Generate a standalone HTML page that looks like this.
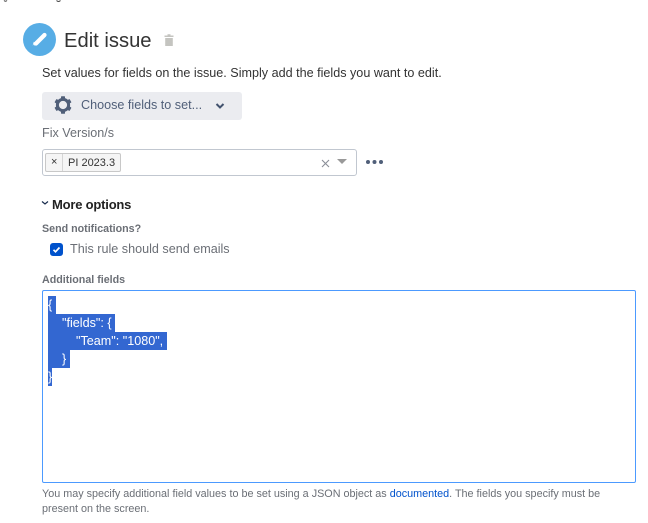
<!DOCTYPE html>
<html><head><meta charset="utf-8"><style>
html,body{margin:0;padding:0;background:#fff}
body{width:648px;height:523px;position:relative;overflow:hidden;font-family:"Liberation Sans",sans-serif}
.a{position:absolute;white-space:nowrap}
</style></head><body>
<svg class="a" style="left:0;top:0" width="70" height="4" viewBox="0 0 70 4"><path d="M4 0.5Q5.5 2 7 0.5M56.5 0.5Q58.5 2.5 60.5 0.5" fill="none" stroke="#444" stroke-width="1"/></svg>
<svg class="a" style="left:23px;top:23px" width="33" height="33" viewBox="0 0 33 33"><circle cx="16.5" cy="16.5" r="16.5" fill="#57ade5"/><path d="M13 20.5 L21.5 12" stroke="#fff" stroke-width="4.2" stroke-linecap="round"/><path d="M9.5 23 L10.8 18.8 L13.8 21.8 Z" fill="#fff"/><path d="M9.5 23.2 L11 21.7" stroke="#57ade5" stroke-width="1"/></svg>
<div class="a" style="left:64px;top:29px;font-size:20.2px;line-height:24px;color:#333">Edit issue</div>
<svg class="a" style="left:163px;top:33px" width="12" height="14" viewBox="0 0 12 14"><path d="M1.5 2.5H4.5V1.2H7.5V2.5H10.5V4H1.5Z M2.2 5H9.8V13H2.2Z" fill="#c4c4c0"/></svg>
<div class="a" style="left:42px;top:65px;font-size:12.6px;line-height:16px;color:#333">Set values for fields on the issue. Simply add the fields you want to edit.</div>
<div class="a" style="left:42px;top:92px;width:200px;height:28px;background:#ebecf0;border-radius:3px"></div>
<svg class="a" style="left:54px;top:96px" width="18" height="18" viewBox="0 0 18 18"><circle cx="9" cy="9" r="5.6" fill="none" stroke="#505f79" stroke-width="3"/><g fill="#505f79"><rect x="7" y="0.3" width="4" height="3" rx=".6"/><rect x="7" y="14.7" width="4" height="3" rx=".6"/><rect x="7" y="0.3" width="4" height="3" rx=".6" transform="rotate(60 9 9)"/><rect x="7" y="0.3" width="4" height="3" rx=".6" transform="rotate(120 9 9)"/><rect x="7" y="0.3" width="4" height="3" rx=".6" transform="rotate(240 9 9)"/><rect x="7" y="0.3" width="4" height="3" rx=".6" transform="rotate(300 9 9)"/></g></svg>
<div class="a" style="left:81px;top:97px;font-size:12.6px;line-height:16px;color:#505f79">Choose fields to set...</div>
<svg class="a" style="left:215px;top:102px" width="10" height="8" viewBox="0 0 10 8"><path d="M1.5 2 L5 5.5 L8.5 2" fill="none" stroke="#42526e" stroke-width="2"/></svg>
<div class="a" style="left:42px;top:125px;font-size:12.6px;line-height:16px;color:#6b6f76">Fix Version/s</div>
<div class="a" style="left:42px;top:149px;width:313px;height:25px;border:1px solid #c1c7d0;border-radius:3px;background:#fff"></div>
<div class="a" style="left:45px;top:153px;width:74px;height:17px;border:1px solid #c8c8c8;border-radius:2px;background:#f5f5f5"></div>
<div class="a" style="left:62px;top:154px;width:1px;height:17px;background:#d5d5d5"></div>
<div class="a" style="left:51px;top:155px;font-size:11px;line-height:14px;color:#333">×</div>
<div class="a" style="left:68px;top:156px;font-size:11px;line-height:14px;color:#333">PI 2023.3</div>
<svg class="a" style="left:321px;top:159px" width="9" height="9" viewBox="0 0 9 9"><path d="M1 1L8 8M8 1L1 8" stroke="#8a8f98" stroke-width="1.1"/></svg>
<svg class="a" style="left:337px;top:159px" width="10" height="6" viewBox="0 0 10 6"><path d="M0 0H10L5 5Z" fill="#999"/></svg>
<svg class="a" style="left:365px;top:159px" width="19" height="6" viewBox="0 0 19 6"><g fill="#505f79"><circle cx="3" cy="3" r="2"/><circle cx="9.5" cy="3" r="2"/><circle cx="16" cy="3" r="2"/></g></svg>
<svg class="a" style="left:41px;top:200px" width="8" height="6" viewBox="0 0 8 6"><path d="M1 1.5L4 4L7 1.5" fill="none" stroke="#172b4d" stroke-width="1.2"/></svg>
<div class="a" style="left:52px;top:197px;font-size:13px;line-height:16px;font-weight:bold;color:#222;letter-spacing:-.2px">More options</div>
<div class="a" style="left:42px;top:223px;font-size:10.7px;line-height:13px;font-weight:bold;color:#6b6f76">Send notifications?</div>
<div class="a" style="left:50px;top:243px;width:13px;height:13px;background:#0052cc;border-radius:3px"></div>
<svg class="a" style="left:50px;top:243px" width="13" height="13" viewBox="0 0 13 13"><path d="M3.5 6.8L5.5 8.8L9.5 4.5" fill="none" stroke="#fff" stroke-width="1.7"/></svg>
<div class="a" style="left:70px;top:241px;font-size:12.6px;line-height:16px;color:#6b6f76">This rule should send emails</div>
<div class="a" style="left:42px;top:274px;font-size:10.7px;line-height:13px;font-weight:bold;color:#6b6f76">Additional fields</div>
<div class="a" style="left:42px;top:290px;width:592px;height:191px;border:1px solid #4c9aff;border-radius:2px;background:#fff"></div>
<div class="a" style="left:48px;top:296px;width:8px;height:18px;background:#3367d1"></div>
<div class="a" style="left:48px;top:314px;width:67px;height:18px;background:#3367d1"></div>
<div class="a" style="left:48px;top:332px;width:119px;height:18px;background:#3367d1"></div>
<div class="a" style="left:48px;top:350px;width:22px;height:18px;background:#3367d1"></div>
<div class="a" style="left:48px;top:368px;width:4px;height:18px;background:#3367d1"></div>
<pre class="a" style="left:48px;top:296px;margin:0;white-space:pre;font-family:'Liberation Sans',sans-serif;font-size:12.6px;line-height:18px;color:#fff">{
    "fields": {
        "Team": "1080",
    }
}</pre>
<div class="a" style="left:42px;top:487px;font-size:10.8px;line-height:15px;color:#6b6f76">You may specify additional field values to be set using a JSON object as <span style="color:#0052cc">documented</span>. The fields you specify must be<br>present on the screen.</div>
</body></html>
